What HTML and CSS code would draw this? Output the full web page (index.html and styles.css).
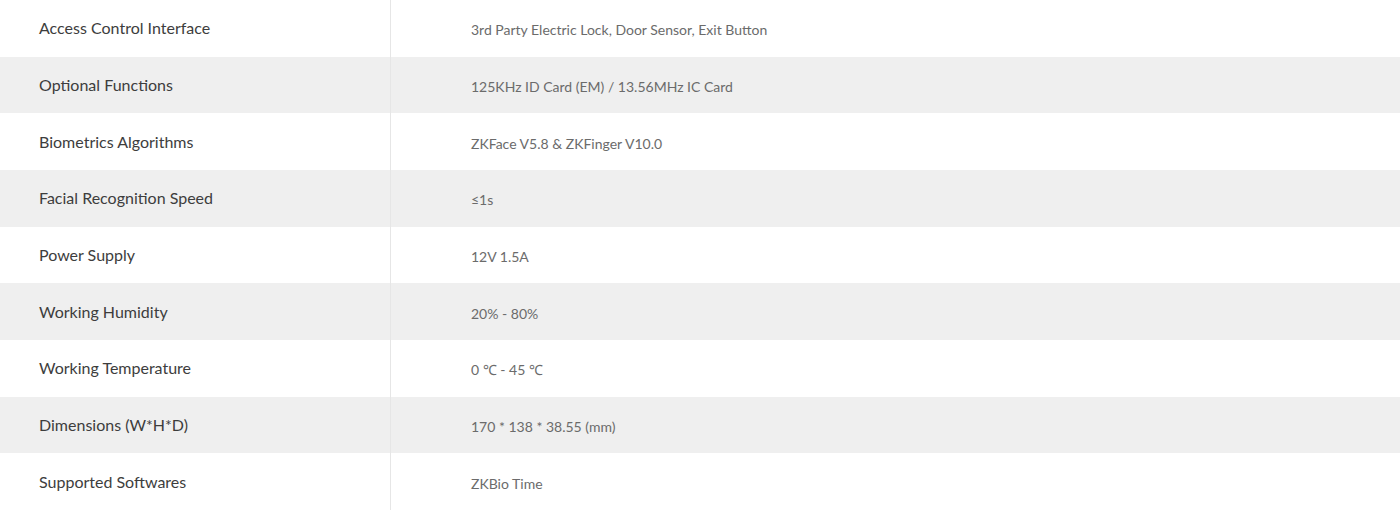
FILE: index.html
```html
<!DOCTYPE html>
<html lang="en">
<head>
<meta charset="utf-8">
<title>Specifications</title>
<link rel="stylesheet" href="styles.css">
</head>
<body>
<div class="specs">
  <div class="row"><div class="label">Access Control Interface</div><div class="value">3rd Party Electric Lock, Door Sensor, Exit Button</div></div>
  <div class="row alt"><div class="label">Optional Functions</div><div class="value">125KHz ID Card (EM) / 13.56MHz IC Card</div></div>
  <div class="row"><div class="label">Biometrics Algorithms</div><div class="value">ZKFace V5.8 &amp; ZKFinger V10.0</div></div>
  <div class="row alt"><div class="label">Facial Recognition Speed</div><div class="value">≤1s</div></div>
  <div class="row"><div class="label">Power Supply</div><div class="value">12V 1.5A</div></div>
  <div class="row alt"><div class="label">Working Humidity</div><div class="value">20% - 80%</div></div>
  <div class="row"><div class="label">Working Temperature</div><div class="value">0 ℃ - 45 ℃</div></div>
  <div class="row alt"><div class="label">Dimensions (W*H*D)</div><div class="value">170 * 138 * 38.55 (mm)</div></div>
  <div class="row"><div class="label">Supported Softwares</div><div class="value">ZKBio Time</div></div>
</div>
</body>
</html>
```
FILE: styles.css
```css
html, body {
  margin: 0;
  padding: 0;
  background: #ffffff;
}
body {
  font-family: "Lato", "Liberation Sans", sans-serif;
}
.specs {
  display: flex;
  flex-direction: column;
  width: 1400px;
}
.row {
  display: grid;
  grid-template-columns: 391px 1fr;
  height: 56.67px;
}
.row.alt {
  background: #efefef;
}
.label {
  display: flex;
  align-items: center;
  padding-left: 39px;
  padding-bottom: 1px;
  border-right: 1px solid #e6e6e6;
  font-size: 16px;
  color: #3d3d3d;
}
.value {
  display: flex;
  align-items: center;
  padding-left: 80px;
  padding-top: 3px;
  font-size: 14px;
  color: #6b6b6b;
}
```
